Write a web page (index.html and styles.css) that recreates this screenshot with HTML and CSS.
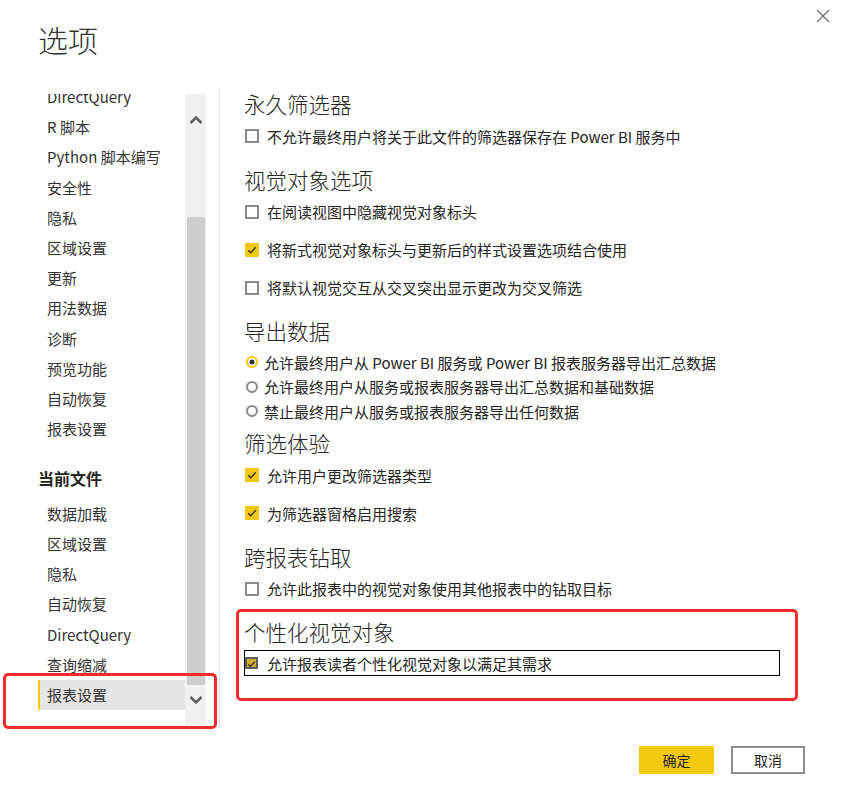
FILE: index.html
```html
<!DOCTYPE html>
<html lang="zh-CN">
<head>
<meta charset="utf-8">
<title>选项</title>
<link rel="stylesheet" href="styles.css">
</head>
<body>
<div class="dialog">
  <div class="header">
    <div class="title">选项</div>
    <div class="close">
      <svg width="14" height="14" viewBox="0 0 14 14"><path d="M1 1 L13 13 M13 1 L1 13" stroke="#666" stroke-width="1.1" fill="none"/></svg>
    </div>
  </div>
  <div class="main">
    <div class="nav">
      <div class="nav-view">
        <div class="nav-scroll">
          <div class="nav-item">DirectQuery</div>
          <div class="nav-item">R 脚本</div>
          <div class="nav-item">Python 脚本编写</div>
          <div class="nav-item">安全性</div>
          <div class="nav-item">隐私</div>
          <div class="nav-item">区域设置</div>
          <div class="nav-item">更新</div>
          <div class="nav-item">用法数据</div>
          <div class="nav-item">诊断</div>
          <div class="nav-item">预览功能</div>
          <div class="nav-item">自动恢复</div>
          <div class="nav-item">报表设置</div>
          <div class="nav-group">当前文件</div>
          <div class="nav-item">数据加载</div>
          <div class="nav-item">区域设置</div>
          <div class="nav-item">隐私</div>
          <div class="nav-item">自动恢复</div>
          <div class="nav-item">DirectQuery</div>
          <div class="nav-item">查询缩减</div>
          <div class="nav-item selected">报表设置</div>
        </div>
      </div>
      <div class="scrollbar">
        <div class="sb-up">
          <svg width="14" height="10" viewBox="0 0 14 10"><path d="M1.5 8 L7 2.5 L12.5 8" stroke="#606060" stroke-width="2.6" fill="none"/></svg>
        </div>
        <div class="sb-thumb"></div>
        <div class="sb-down">
          <svg width="14" height="10" viewBox="0 0 14 10"><path d="M1.5 2 L7 7.5 L12.5 2" stroke="#606060" stroke-width="2.6" fill="none"/></svg>
        </div>
      </div>
    </div>
    <div class="divider"></div>
    <div class="content">
      <div class="section first">
        <div class="heading">永久筛选器</div>
        <div class="row"><span class="cb"></span><span>不允许最终用户将关于此文件的筛选器保存在 Power BI 服务中</span></div>
      </div>
      <div class="section">
        <div class="heading">视觉对象选项</div>
        <div class="row"><span class="cb"></span><span>在阅读视图中隐藏视觉对象标头</span></div>
        <div class="row"><span class="cb checked"><svg width="14" height="14" viewBox="0 0 14 14"><path d="M3.2 7.2 L5.8 9.8 L10.8 4.2" stroke="#333" stroke-width="1.4" fill="none"/></svg></span><span>将新式视觉对象标头与更新后的样式设置选项结合使用</span></div>
        <div class="row"><span class="cb"></span><span>将默认视觉交互从交叉突出显示更改为交叉筛选</span></div>
      </div>
      <div class="section">
        <div class="heading">导出数据</div>
        <div class="radios">
          <div class="rrow"><span class="radio on"></span><span>允许最终用户从 Power BI 服务或 Power BI 报表服务器导出汇总数据</span></div>
          <div class="rrow"><span class="radio"></span><span>允许最终用户从服务或报表服务器导出汇总数据和基础数据</span></div>
          <div class="rrow"><span class="radio"></span><span>禁止最终用户从服务或报表服务器导出任何数据</span></div>
        </div>
      </div>
      <div class="section tight">
        <div class="heading">筛选体验</div>
        <div class="row"><span class="cb checked"><svg width="14" height="14" viewBox="0 0 14 14"><path d="M3.2 7.2 L5.8 9.8 L10.8 4.2" stroke="#333" stroke-width="1.4" fill="none"/></svg></span><span>允许用户更改筛选器类型</span></div>
        <div class="row"><span class="cb checked"><svg width="14" height="14" viewBox="0 0 14 14"><path d="M3.2 7.2 L5.8 9.8 L10.8 4.2" stroke="#333" stroke-width="1.4" fill="none"/></svg></span><span>为筛选器窗格启用搜索</span></div>
      </div>
      <div class="section">
        <div class="heading">跨报表钻取</div>
        <div class="row"><span class="cb"></span><span>允许此报表中的视觉对象使用其他报表中的钻取目标</span></div>
      </div>
      <div class="section">
        <div class="heading">个性化视觉对象</div>
        <div class="focus-row"><span class="cb focus"><svg width="12" height="12" viewBox="0 0 12 12"><path d="M2.3 6.2 L4.8 8.7 L9.6 3.4" stroke="#333" stroke-width="1.4" fill="none"/></svg></span><span>允许报表读者个性化视觉对象以满足其需求</span></div>
      </div>
    </div>
  </div>
  <div class="footer">
    <button class="btn primary">确定</button>
    <button class="btn secondary">取消</button>
  </div>
  <div class="mark mark-nav"></div>
  <div class="mark mark-section"></div>
</div>
</body>
</html>
```

FILE: styles.css
```css
* { box-sizing: border-box; }
html, body { margin: 0; padding: 0; background: #fff; }
body {
  font-family: "Noto Sans CJK SC", "Noto Sans", sans-serif;
  color: #252423;
}
.dialog {
  position: relative;
  width: 843px;
  height: 811px;
  overflow: hidden;
}
.header {
  height: 88px;
  display: flex;
  justify-content: space-between;
  align-items: flex-start;
}
.title {
  margin: 19px 0 0 38px;
  font-size: 30px;
  line-height: 40px;
  font-weight: 300;
  color: #333;
}
.close {
  margin: 9px 13px 0 0;
  width: 14px;
  height: 14px;
  display: flex;
}
.main {
  display: flex;
  height: 640px;
}
.nav {
  width: 219px;
  display: flex;
  align-items: flex-start;
  padding-top: 6px;
}
.nav-view {
  width: 147px;
  margin-left: 38px;
  height: 631px;
  overflow: hidden;
}
.nav-scroll {
  margin-top: -12px;
}
.nav-item {
  height: 30.2px;
  line-height: 30.2px;
  padding-left: 9px;
  font-size: 15px;
  color: #333;
  white-space: nowrap;
}
.nav-item.selected {
  background: #e6e6e6;
  border-left: 2px solid #f2c811;
  padding-left: 7px;
}
.nav-group {
  height: 54.6px;
  padding-top: 22px;
  line-height: 24px;
  font-size: 16px;
  font-weight: 700;
  color: #252423;
}
.scrollbar {
  width: 21px;
  height: 631px;
  background: #f0f0f0;
  display: flex;
  flex-direction: column;
}
.sb-up {
  height: 52px;
  display: flex;
  align-items: center;
  justify-content: center;
}
.sb-thumb {
  margin: 71px 1px 0 2px;
  height: 468px;
  background: #cdcdcd;
}
.sb-down {
  height: 30px;
  display: flex;
  align-items: center;
  justify-content: center;
}
.divider {
  width: 1px;
  background: #e1e1e1;
  margin-top: -1px;
}
.content {
  flex: 1;
  padding: 3px 0 0 24px;
}
.section { margin-top: 11.5px; }
.section.first { margin-top: 0; }
.section.tight { margin-top: 0; }
.heading {
  height: 26px;
  line-height: 26px;
  font-size: 21.5px;
  font-weight: 300;
  color: #252423;
  white-space: nowrap;
}
.row {
  height: 38px;
  display: flex;
  align-items: center;
  font-size: 15px;
  color: #252423;
  white-space: nowrap;
}
.cb {
  width: 14px;
  height: 14px;
  margin: 0 8px 0 1px;
  border: 2px solid #8a8a8a;
  background: #fff;
  flex: none;
  display: flex;
}
.cb svg { margin: -2px; }
.cb.checked {
  border: none;
  background: #f2c811;
}
.cb.checked svg { margin: 0; }
.radios { padding: 5.75px 0 6.75px; }
.rrow {
  height: 24.5px;
  display: flex;
  align-items: center;
  font-size: 15px;
  white-space: nowrap;
}
.radio {
  width: 12px;
  height: 12px;
  border-radius: 50%;
  border: 2px solid #8a8a8a;
  margin: 0 6px 0 2px;
  flex: none;
  background: #fff;
}
.radio.on {
  border-color: #f2c811;
  background: radial-gradient(circle, #333 0 2.2px, #fff 2.8px);
}
.focus-row {
  margin-top: 5px;
  width: 536px;
  height: 26px;
  border: 1px solid #000;
  display: flex;
  align-items: center;
  font-size: 15px;
  white-space: nowrap;
}
.cb.focus {
  width: 13px;
  height: 12px;
  margin: 0 9px 0 0;
  border: 2px solid #5e5e5e;
  background: #d4aa2a;
}
.cb.focus svg { margin: -1px; }
.footer {
  display: flex;
  justify-content: flex-end;
  gap: 17px;
  padding: 18px 38px 0 0;
}
.btn {
  width: 75px;
  height: 28px;
  font-family: "Noto Sans CJK SC", sans-serif;
  font-size: 14px;
  color: #252423;
  padding: 0;
  cursor: pointer;
}
.btn.primary {
  background: #f2c811;
  border: none;
}
.btn.secondary {
  width: 74px;
  background: #fff;
  border: 2px solid #8f8f8f;
}
.mark {
  position: absolute;
  border: 3px solid #f52a2a;
  border-radius: 5px;
  pointer-events: none;
}
.mark-nav {
  left: 3px;
  top: 673px;
  width: 214px;
  height: 56px;
}
.mark-section {
  left: 236px;
  top: 609px;
  width: 562px;
  height: 92px;
}
```
